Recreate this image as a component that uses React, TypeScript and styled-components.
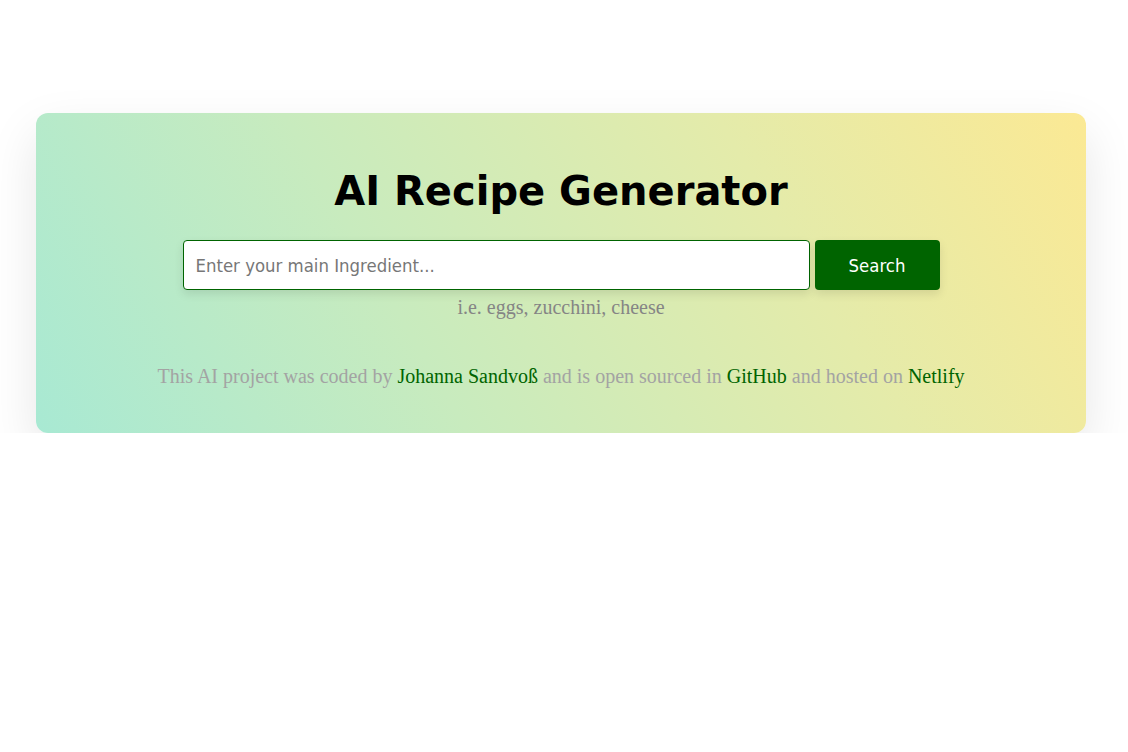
import React from "react";
import styled, { createGlobalStyle } from "styled-components";

const GlobalStyle = createGlobalStyle`
  body {
    margin: 0;
    background: #ffffff;
    font-family: "Liberation Serif", "Times New Roman", serif;
  }
`;

const Page = styled.div`
  padding: 113px 42px 0 36px;
`;

const Card = styled.div`
  background: linear-gradient(60deg, #a8e9d3 0%, #c8ebbe 35%, #e4ebaa 70%, #fbe994 100%);
  border-radius: 12px;
  box-shadow: 0 20px 50px rgba(0, 0, 0, 0.1);
  padding: 55px 20px 45px;
  text-align: center;
`;

const Title = styled.h1`
  font-family: "DejaVu Sans", Verdana, sans-serif;
  font-weight: bold;
  font-size: 40px;
  margin: 0 0 26px;
  color: #000;
`;

const SearchForm = styled.form`
  display: flex;
  justify-content: center;
  gap: 5px;
`;

const SearchInput = styled.input`
  width: 627px;
  height: 50px;
  box-sizing: border-box;
  border: 1px solid #006400;
  border-radius: 4px;
  padding: 0 12px;
  font-family: "DejaVu Sans Condensed", "DejaVu Sans", sans-serif;
  font-size: 18.4px;
  box-shadow: 0 4px 10px rgba(0, 0, 0, 0.1);
  outline: none;

  &::placeholder {
    color: #777;
  }
`;

const SearchButton = styled.button`
  width: 125px;
  height: 50px;
  border: none;
  border-radius: 4px;
  background: #006400;
  color: #fff;
  font-family: "DejaVu Sans Condensed", "DejaVu Sans", sans-serif;
  font-size: 18.4px;
  box-shadow: 0 4px 10px rgba(0, 0, 0, 0.1);
  cursor: pointer;
`;

const Hint = styled.div`
  color: #858585;
  font-size: 20px;
  margin-top: 6px;
`;

const Footer = styled.footer`
  color: #a3a3a3;
  font-size: 20px;
  margin-top: 46px;
`;

const Link = styled.a`
  color: #006400;
  text-decoration: none;
`;

export default function App() {
  return (
    <>
      <GlobalStyle />
      <Page>
        <Card>
          <Title>AI Recipe Generator</Title>
          <SearchForm onSubmit={(e) => e.preventDefault()}>
            <SearchInput type="search" placeholder="Enter your main Ingredient..." />
            <SearchButton type="submit">Search</SearchButton>
          </SearchForm>
          <Hint>i.e. eggs, zucchini, cheese</Hint>
          <Footer>
            This AI project was coded by <Link href="#">Johanna Sandvoß</Link> and is open sourced
            in <Link href="#">GitHub</Link> and hosted on <Link href="#">Netlify</Link>
          </Footer>
        </Card>
      </Page>
    </>
  );
}
